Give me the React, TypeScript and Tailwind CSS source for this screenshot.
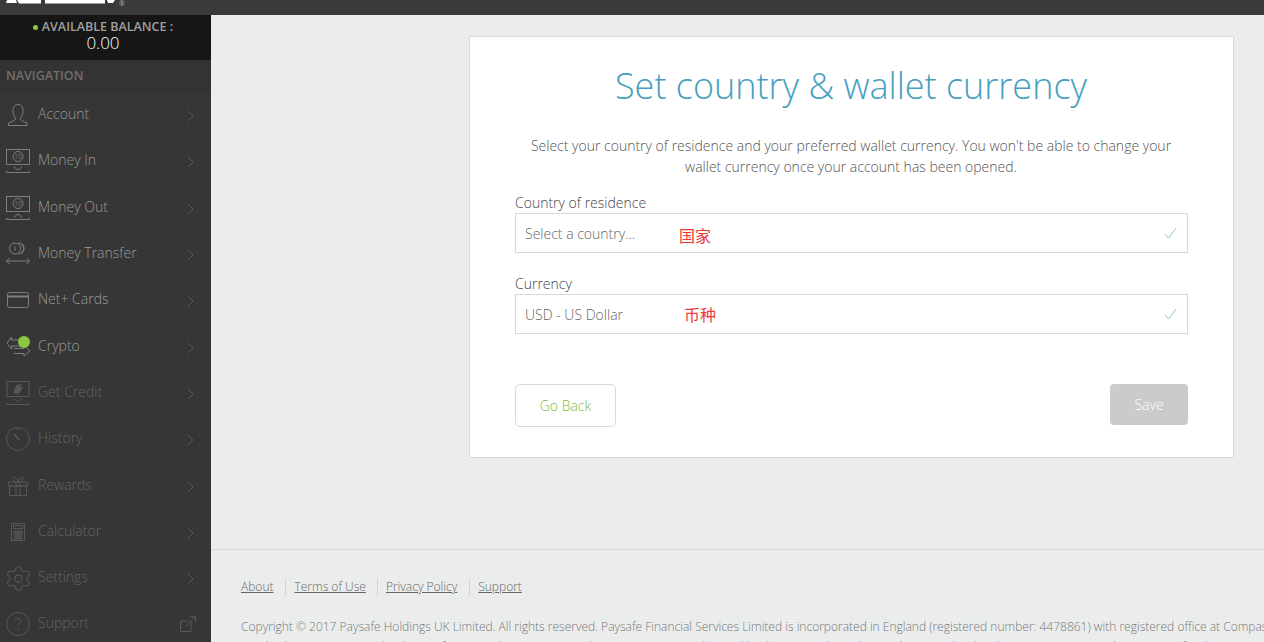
import type { ReactNode } from "react";
import { Settings } from "lucide-react";

const stroke = { fill: "none", stroke: "currentColor", strokeWidth: 1 };

function MoneyBox({ up }: { up?: boolean }) {
  return (
    <svg width="24" height="24" viewBox="0 0 24 24" {...stroke}>
      <rect x="0.5" y="0.5" width="23" height="15" />
      <circle cx="12" cy="7.500" r="5" />
      <text x="12" y="10" textAnchor="middle" fontSize="6.500" stroke="none" fill="currentColor" fontFamily="Open Sans">10</text>
      <path d={up ? "M8 21l4-3 4 3" : "M8 18l4 3 4-3"} />
      <path d="M0.5 22v1.500h23V22" />
    </svg>
  );
}

const icons: Record<string, ReactNode> = {
  Account: (
    <svg width="20" height="22" viewBox="0 0 20 22" {...stroke}>
      <path d="M7.500 14C5.500 12 5 9.500 5 6.500 5 3 7 .5 10 .5s5 2.500 5 6c0 3-.5 5.500-2.500 7.500-.5 1.500 0 2 2 3l4.500 2v2.500H.5V19L5 17c2-1 3-1.500 2.500-3z" />
    </svg>
  ),
  "Money In": <MoneyBox />,
  "Money Out": <MoneyBox up />,
  "Money Transfer": (
    <svg width="24" height="24" viewBox="0 0 24 24" {...stroke}>
      <circle cx="9" cy="6.500" r="5.500" />
      <path d="M12 1a5.500 5.500 0 0 1 0 11M14.500 1.300a5.500 5.500 0 0 1 0 10.400" />
      <path d="M9 4.500v4" />
      <path d="M.5 19h23M3.500 16l-3 3 3 3M20.500 16l3 3-3 3" />
    </svg>
  ),
  "Net+ Cards": (
    <svg width="22" height="16" viewBox="0 0 22 16" {...stroke}>
      <rect x="0.5" y="0.500" width="21" height="15" rx="2" />
      <path d="M.5 4.500h21" strokeWidth="2" />
    </svg>
  ),
  Crypto: (
    <svg width="24" height="21" viewBox="0 0 24 21" {...stroke}>
      <path d="M14 4H5.500V1L1 7l4.500 6v-3H14" />
      <path d="M8 12.500h10V10l6 5-6 5v-2.500H8" />
    </svg>
  ),
  "Get Credit": (
    <svg width="24" height="24" viewBox="0 0 24 24" {...stroke}>
      <rect x="1" y="0.500" width="22" height="15" />
      <path d="M8 11l3-7h5l-5 2.500h5L13 12H8z" fill="currentColor" />
      <path d="M8 18l4 3 4-3M1 22v1.500h22V22" />
    </svg>
  ),
  History: (
    <svg width="24" height="24" viewBox="0 0 24 24" {...stroke}>
      <circle cx="12" cy="12" r="11.500" />
      <path d="M8 7l5 6" strokeWidth="1.500" />
      <path d="M12 .5v3" />
    </svg>
  ),
  Rewards: (
    <svg width="20" height="20" viewBox="0 0 20 20" {...stroke}>
      <path d="M.5 6h19v4H.5zM1.500 10h17v9.500h-17zM8 6v13.500M12 6v13.500" />
      <path d="M10 6C7 6 4 5 5 2c1-2 4 0 5 4zM10 6c3 0 6-1 5-4-1-2-4 0-5 4z" />
    </svg>
  ),
  Calculator: (
    <svg width="14" height="18" viewBox="0 0 14 18" {...stroke}>
      <rect x="0.5" y="0.500" width="13" height="17" />
      <rect x="2.500" y="2.500" width="9" height="3" />
      <path d="M2.500 8h9M2.500 10h9M2.500 12h9M2.500 14h9M2.500 16h9M5 8v8M7.500 8v8M10 8v8" />
    </svg>
  ),
  Settings: <Settings size={29} strokeWidth={0.85} className="shrink-0" />,
  Support: (
    <svg width="24" height="24" viewBox="0 0 24 24" {...stroke}>
      <circle cx="12" cy="12" r="11.500" />
      <path d="M9 9.500c0-2 1.300-3 3-3s3 1 3 2.700c0 2.300-3 2.300-3 4.800M12 16.500v1.500" />
    </svg>
  ),
};

const navItems = [
  { label: "Account", text: "text-[#9a9a9a]", icon: "text-[#7e7e7e]" },
  { label: "Money In", text: "text-[#9a9a9a]", icon: "text-[#7e7e7e]" },
  { label: "Money Out", text: "text-[#9a9a9a]", icon: "text-[#7e7e7e]" },
  { label: "Money Transfer", text: "text-[#9a9a9a]", icon: "text-[#7e7e7e]" },
  { label: "Net+ Cards", text: "text-[#9a9a9a]", icon: "text-[#7e7e7e]" },
  { label: "Crypto", text: "text-[#9a9a9a]", icon: "text-[#7e7e7e]" },
  { label: "Get Credit", text: "text-[#636363]", icon: "text-[#585858]" },
  { label: "History", text: "text-[#636363]", icon: "text-[#585858]" },
  { label: "Rewards", text: "text-[#636363]", icon: "text-[#585858]" },
  { label: "Calculator", text: "text-[#636363]", icon: "text-[#585858]" },
  { label: "Settings", text: "text-[#636363]", icon: "text-[#585858]" },
  { label: "Support", text: "text-[#636363]", icon: "text-[#585858]" },
];

function NavRow({ label, text, icon }: { label: string; text: string; icon: string }) {
  const isSupport = label === "Support";
  return (
    <div className={`flex h-[46.300px] shrink-0 items-center pl-[6px] ${isSupport ? "pr-[15px]" : "pr-[17px]"}`}>
      <div className={`relative flex w-[32px] shrink-0 items-center justify-center pr-[8px] ${icon}`}>
        {icons[label]}
        {label === "Crypto" && (
          <span className="absolute left-[12px] top-0 h-[12px] w-[12px] rounded-full bg-[#8dc73f]" />
        )}
      </div>
      <span className={`mb-[3px] text-[14px] font-light ${text}`}>{label}</span>
      <div className={`ml-auto text-[#585858] ${isSupport ? "" : "mt-[2px]"}`}>
        {isSupport ? (
          <svg width="16" height="16" viewBox="0 0 16 16" {...stroke}>
            <path d="M11 5v10.500H.5V5h8M6 10l9-9M10 .5h5.500V6" />
          </svg>
        ) : (
          <svg width="7" height="12" viewBox="0 0 7 12" {...stroke}>
            <path d="M1 1l5 5-5 5" />
          </svg>
        )}
      </div>
    </div>
  );
}

function SelectBox({ value, note, noteClass }: { value: string; note: string; noteClass: string }) {
  return (
    <div className="flex h-[40px] items-center border border-[#d9d9d9] bg-white pl-[9px] pr-[10px]">
      <span className="w-[154px] text-[14px] font-light text-[#666]">{value}</span>
      <span className={`${noteClass} text-[16px] text-[#f03a3a]`}>{note}</span>
      <svg className="mb-[1px] ml-auto text-[#8fd0a8]" width="13" height="12" viewBox="0 0 13 12" {...stroke}>
        <path d="M1 7l3.500 4L12 1" />
      </svg>
    </div>
  );
}

export default function App() {
  return (
    <div className="flex h-[642px] w-[1264px] flex-col overflow-hidden bg-[#ebeded] font-['Open_Sans','Noto_Sans_CJK_SC',sans-serif]">
      <header className="flex h-[15px] shrink-0 items-start bg-[#3a3a3a] pl-[6px]">
        <svg width="109" height="4" viewBox="0 0 109 4" className="shrink-0 text-white">
          <path d="M1 0h9l1 3H0zM11 0h24v3.500H13zM39 0h60v3.500H39zM101 0h8l-2 3h-5z" fill="currentColor" />
        </svg>
        <span className="ml-[4px] text-[7px] leading-[8px] text-[#b5b5b5]">®</span>
      </header>
      <div className="flex min-h-0 flex-1">
        <aside className="flex w-[211px] shrink-0 flex-col overflow-hidden bg-[#363636]">
          <div className="flex h-[45px] shrink-0 flex-col items-center bg-[#161616] pr-[5px] pt-[4px]">
            <div className="flex h-[16px] items-center gap-[4px] text-[12.500px] font-semibold leading-[16px] text-[#a0a0a0]">
              <span className="h-[5px] w-[5px] rounded-full bg-[#8dc73f]" />
              AVAILABLE BALANCE :
            </div>
            <div className="text-[17px] font-light leading-[16px] text-white">0.00</div>
          </div>
          <div className="flex h-[32px] shrink-0 items-center bg-[#333] pl-[6px] text-[12.500px] font-semibold text-[#6f6f6f]">
            NAVIGATION
          </div>
          {navItems.map((item) => (
            <NavRow key={item.label} label={item.label} text={item.text} icon={item.icon} />
          ))}
        </aside>
        <main className="flex min-w-0 flex-1 flex-col">
          <div className="h-[534px] shrink-0 pl-[258px] pt-[21px]">
            <div className="flex h-[422px] w-[765px] flex-col border border-[#d9d9d9] bg-white px-[45px]">
              <h1 className="mt-[24px] pr-[1px] text-center text-[36px] font-light leading-[49px] text-[#459ec0]">
                Set country &amp; wallet currency
              </h1>
              <p className="mx-auto mt-[25px] w-[660px] pr-[1px] text-center text-[14px] font-light leading-[21px] text-[#555]">
                Select your country of residence and your preferred wallet currency. You won't be able to change your wallet currency once your account has been opened.
              </p>
              <div className="mt-[16px] h-[20px] text-[14px] font-light leading-[20px] text-[#444]">Country of residence</div>
              <SelectBox value="Select a country..." note="国家" noteClass="mt-[6px]" />
              <div className="mt-[21px] h-[20px] text-[14px] font-light leading-[20px] text-[#444]">Currency</div>
              <SelectBox value="USD - US Dollar" note="币种" noteClass="ml-[5px] mt-[2px]" />
              <div className="mt-[50px] flex items-start justify-between">
                <button className="h-[43px] w-[101px] rounded-[5px] border border-[#d9d9d9] bg-white text-[14px] font-light text-[#7fbd35]">
                  Go Back
                </button>
                <button className="h-[41px] w-[78px] rounded-[4px] bg-[#cbcbcb] text-[14px] font-light text-white">
                  Save
                </button>
              </div>
            </div>
          </div>
          <footer className="flex-1 border-t border-[#d9dbdb] pl-[30px]">
            <div className="mt-[27px] flex h-[20px] items-center text-[12px] font-light text-[#666]">
              <a className="pr-[12px] underline">About</a>
              <a className="border-l border-[#d4d4d4] pl-[8px] pr-[11px] underline">Terms of Use</a>
              <a className="border-l border-[#d4d4d4] pl-[8px] pr-[12px] underline">Privacy Policy</a>
              <a className="border-l border-[#d4d4d4] pl-[8px] underline">Support</a>
            </div>
            <p className="mt-[20px] w-[1100px] whitespace-nowrap text-[12px] font-light leading-[20px] text-[#777]">
              Copyright © 2017 Paysafe Holdings UK Limited. All rights reserved. Paysafe Financial Services Limited is incorporated in England (registered number: 4478861) with registered office at Compass House, Chivers Way
              <br />
              Cambridge CB24 9BZ, England. Paysafe Financial Services Limited (FRN: 900015) is authorised by the Financial Conduct Authority under the Electronic Money Regulations 2011 for the issuing of electronic money.
            </p>
          </footer>
        </main>
      </div>
    </div>
  );
}
